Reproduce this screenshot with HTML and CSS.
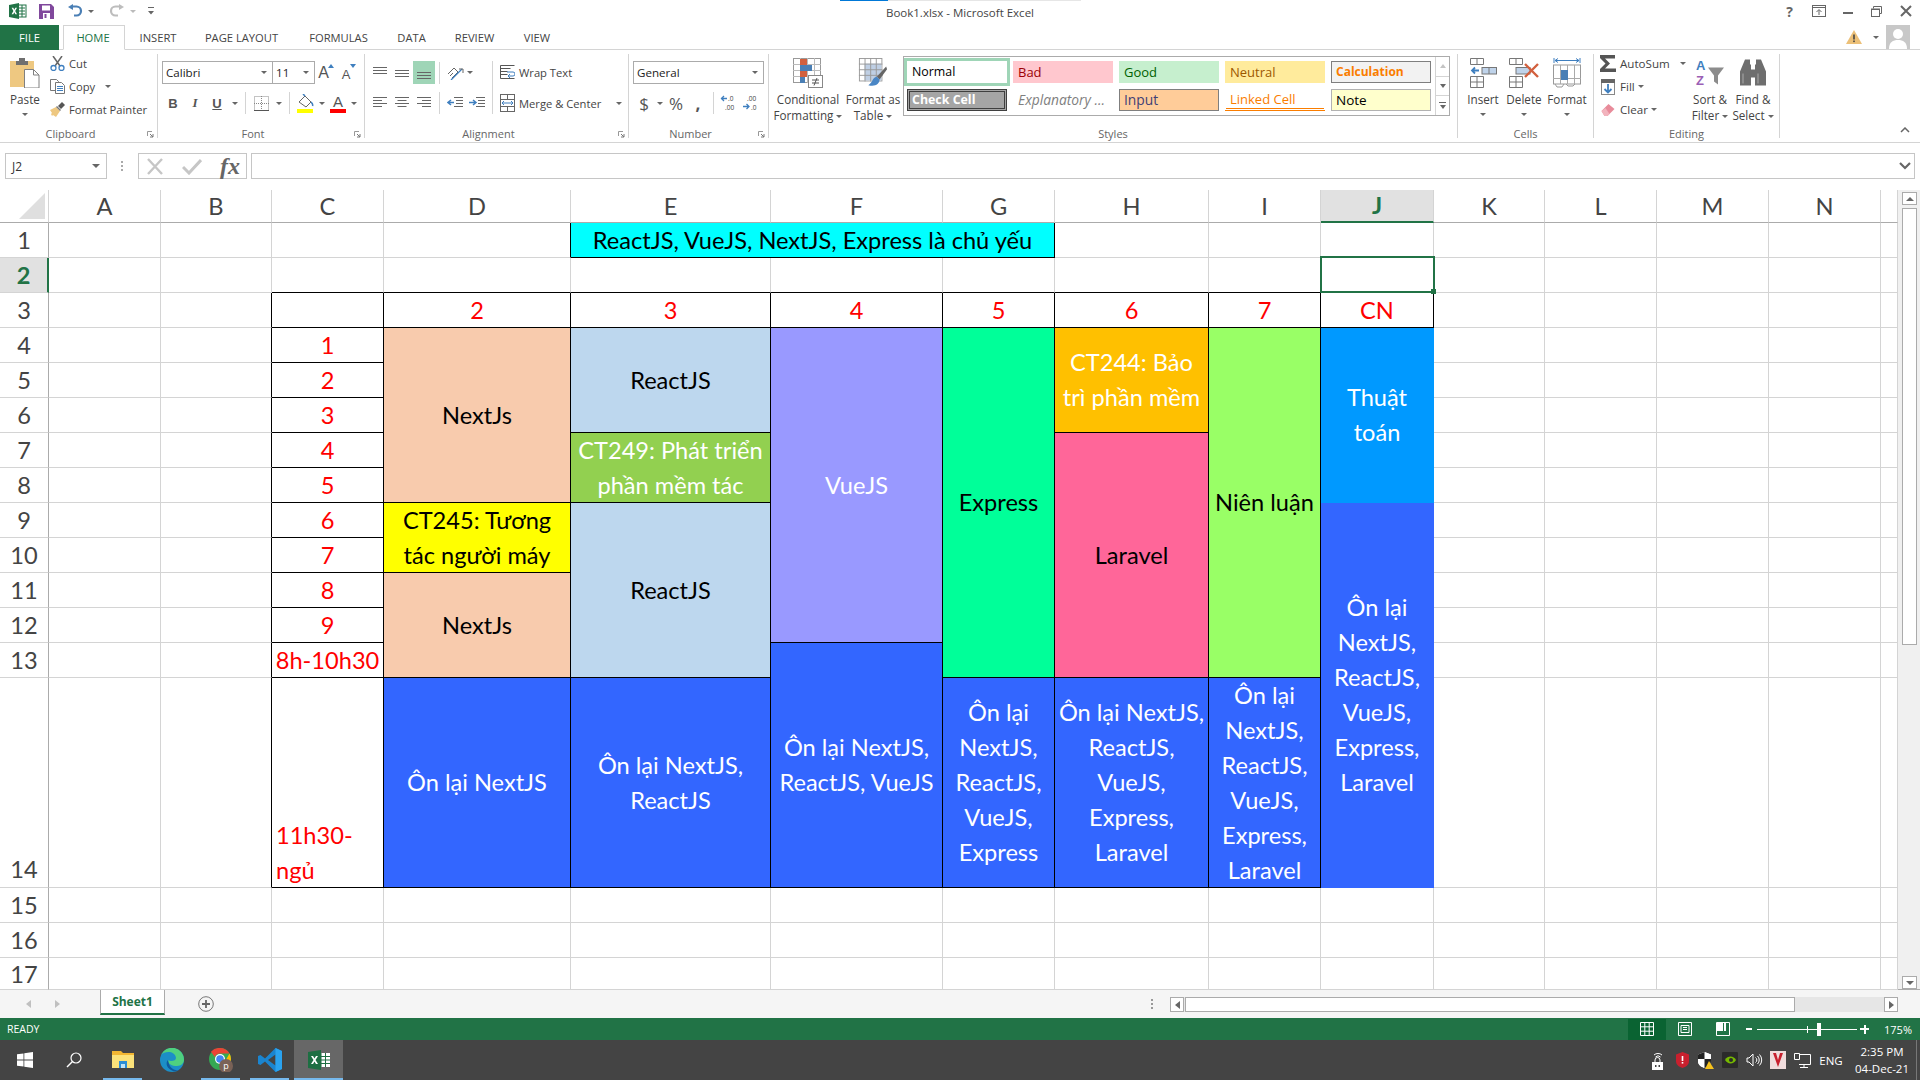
FILE: index.html
```html
<!DOCTYPE html>
<html lang="vi">
<head>
<meta charset="utf-8">
<title>Book1.xlsx - Microsoft Excel</title>
<link rel="stylesheet" href="styles.css">
</head>
<body>
<div class="app">

<header class="titlebar">
  <div class="progress"><span></span></div>
  <div class="qat">
    <svg class="q-logo" width="18" height="16" viewBox="0 0 18 16"><rect x="8" y="2" width="9" height="12" fill="#fff" stroke="#217346"/><path d="M10 5h6M10 8h6M10 11h6M13 2v12" stroke="#217346"/><path d="M0 2l10-2v16L0 14z" fill="#217346"/><path d="M2.6 4.8h1.7l1 2 1-2H8L6.2 8 8 11.2H6.3L5.3 9.2l-1 2H2.6L4.4 8z" fill="#fff"/></svg>
    <svg class="q-save" width="15" height="15" viewBox="0 0 15 15"><path d="M0 0h12l3 3v12H0z" fill="#80489c"/><rect x="3" y="1.5" width="8" height="5" fill="#fff"/><rect x="4" y="9" width="7" height="6" fill="#fff"/><rect x="5.5" y="10" width="2" height="4" fill="#80489c"/></svg>
    <svg class="q-undo" width="15" height="14" viewBox="0 0 15 14"><path d="M4 2.5h4.5a4.5 4.5 0 0 1 0 9H6" fill="none" stroke="#4a7fb5" stroke-width="2.2"/><path d="M5 0v6L0 3z" fill="#4a7fb5"/></svg>
    <i class="caret q-c1"></i>
    <svg class="q-redo" width="15" height="14" viewBox="0 0 15 14"><path d="M11 2.5H6.500a4.500 4.500 0 0 0 0 9H9" fill="none" stroke="#bdbdbd" stroke-width="2.200"/><path d="M10 0v6l5-3z" fill="#bdbdbd"/></svg>
    <i class="caret q-c2 pale"></i>
    <svg class="q-more" width="6" height="8" viewBox="0 0 6 8"><path d="M0 0h6v1H0zM0 4h6L3 7.500z" fill="#666"/></svg>
  </div>
  <div class="doc-title">Book1.xlsx - Microsoft Excel</div>
  <div class="win">
    <span class="w-help">?</span>
    <span class="w-b"><svg width="14" height="12" viewBox="0 0 14 12"><rect x=".5" y=".5" width="13" height="11" fill="none" stroke="#666"/><path d="M.5 2.500h13" stroke="#666"/><path d="M7 10V5M4.500 7L7 4.500 9.500 7" fill="none" stroke="#666"/></svg></span>
    <span class="w-b"><svg width="10" height="10" viewBox="0 0 10 10"><rect y="6" width="10" height="2" fill="#666"/></svg></span>
    <span class="w-b"><svg width="11" height="11" viewBox="0 0 11 11"><path d="M2.500 2.500V.5h8v7H8.500" fill="none" stroke="#666"/><rect x=".5" y="3" width="8" height="7.500" fill="none" stroke="#666"/><path d="M.5 3.500h8" stroke="#666"/></svg></span>
    <span class="w-b"><svg width="12" height="12" viewBox="0 0 12 12"><path d="M1 1l10 10M11 1L1 11" stroke="#666" stroke-width="2"/></svg></span>
  </div>
</header>

<nav class="tabs">
  <span class="tab file">FILE</span>
  <span class="tab home">HOME</span>
  <span class="tab t-insert">INSERT</span>
  <span class="tab t-page">PAGE LAYOUT</span>
  <span class="tab t-form">FORMULAS</span>
  <span class="tab t-data">DATA</span>
  <span class="tab t-rev">REVIEW</span>
  <span class="tab t-view">VIEW</span>
  <div class="account">
    <svg width="16" height="14" viewBox="0 0 16 14"><path d="M8 0l8 14H0z" fill="#ecc078"/><rect x="7.200" y="4.500" width="1.600" height="5" fill="#444"/><rect x="7.200" y="10.500" width="1.600" height="1.600" fill="#444"/></svg>
    <i class="caret acc-c"></i>
    <svg class="avatar" width="24" height="24" viewBox="0 0 24 24"><rect width="24" height="24" fill="#c8c8c8"/><circle cx="12" cy="9" r="5" fill="#fff"/><path d="M3 24c0-7 4-9 9-9s9 2 9 9z" fill="#fff"/></svg>
  </div>
</nav>

<section class="ribbon">

  <div class="group g-clip">
    <div class="body clip-body">
      <div class="big paste">
        <svg width="30" height="30" viewBox="0 0 30 30"><rect y="3" width="24" height="26" fill="#eec881"/><path d="M6 3h12v4H6z" fill="#6f6f6f"/><path d="M9 3V0h6v3" fill="#6f6f6f"/><path d="M14.500 11.500h9l5.500 5.500v13h-14.500z" fill="#fff" stroke="#808080"/><path d="M23.500 11.500v5.500H29" fill="none" stroke="#808080"/></svg>
        <span class="lbl">Paste</span>
        <i class="caret"></i>
      </div>
      <div class="smalls">
        <div class="si"><svg width="15" height="15" viewBox="0 0 15 15"><path d="M3 0l7 10M12 0L5 10" stroke="#666" stroke-width="1.500"/><circle cx="3.500" cy="12" r="2.500" fill="none" stroke="#3f7fbf" stroke-width="1.300"/><circle cx="11.500" cy="12" r="2.500" fill="none" stroke="#3f7fbf" stroke-width="1.300"/></svg><span>Cut</span></div>
        <div class="si"><svg width="15" height="15" viewBox="0 0 15 15"><path d="M.5 .5h6l2 2v9h-8z" fill="#fff" stroke="#777"/><path d="M5.500 3.500h6l3 3v8h-9z" fill="#fff" stroke="#777"/><path d="M7 7.500h6M7 9.500h6M7 11.500h6" stroke="#3f7fbf"/></svg><span>Copy</span><i class="caret copy-c"></i></div>
        <div class="si"><svg width="15" height="15" viewBox="0 0 15 15"><path d="M0 8l6-3 4 4-4 6-3-2-1 1-1-2 1-1z" fill="#eec881"/><path d="M6 5l4 4 1-1-4-4z" fill="#777"/><path d="M8 4l4-4 3 3-4 4z" fill="#555"/></svg><span>Format Painter</span></div>
      </div>
    </div>
    <div class="glabel wl">Clipboard<svg class="launch" width="7" height="7" viewBox="0 0 7 7"><path d="M.5 5V.5H5" fill="none" stroke="#999"/><path d="M3 3l3 3M6 3v3H3" fill="none" stroke="#777"/></svg></div>
  </div>

  <div class="group g-font">
    <div class="body stack">
      <div class="row1">
        <div class="combo c-font"><span>Calibri</span><i class="caret"></i></div>
        <div class="combo c-size"><span>11</span><i class="caret"></i></div>
        <div class="tool w22 grow"><span class="fa big-a">A</span><i class="tri-up"></i></div>
        <div class="tool w22 grow"><span class="fa small-a">A</span><i class="tri-down"></i></div>
      </div>
      <div class="row2">
        <div class="tool w22 fb">B</div>
        <div class="tool w22 fi">I</div>
        <div class="tool w22 fu">U</div>
        <div class="tool w13"><i class="caret"></i></div>
        <i class="sep s-a"></i>
        <div class="tool w22"><svg width="15" height="15" viewBox="0 0 15 15"><path d="M.5 .5h14v14H.5z" fill="none" stroke="#888" stroke-dasharray="1 1"/><path d="M7.500 0v15M0 7.500h15" stroke="#888" stroke-dasharray="1 1"/><path d="M0 14.500h15" stroke="#555"/></svg></div>
        <div class="tool w13"><i class="caret"></i></div>
        <i class="sep s-a"></i>
        <div class="tool w22"><svg width="17" height="19" viewBox="0 0 17 19"><path d="M2 8l6-6 6 6-5 5z" fill="#fff" stroke="#666"/><path d="M6 0l2 2M14 8c2 2 2 3 1.500 4" stroke="#3f7fbf" fill="none" stroke-width="1.500"/><rect y="15" width="16" height="4" fill="#ff0"/></svg></div>
        <div class="tool w11"><i class="caret"></i></div>
        <div class="tool w22 fontcolor"><span class="fa fc">A</span><i class="bar"></i></div>
        <div class="tool w10"><i class="caret"></i></div>
      </div>
    </div>
    <div class="glabel wl">Font<svg class="launch" width="7" height="7" viewBox="0 0 7 7"><path d="M.5 5V.5H5" fill="none" stroke="#999"/><path d="M3 3l3 3M6 3v3H3" fill="none" stroke="#777"/></svg></div>
  </div>

  <div class="group g-align">
    <div class="body align-body">
      <div class="stack">
        <div class="row1">
          <div class="tool w22"><svg width="14" height="12" viewBox="0 0 14 12"><path d="M0 .5h14M0 3.500h14M0 6.500h14" stroke="#666"/></svg></div>
          <div class="tool w22"><svg width="14" height="12" viewBox="0 0 14 12"><path d="M0 3.500h14M0 6.500h14M0 9.500h14" stroke="#666"/></svg></div>
          <div class="tool w22 on"><svg width="14" height="12" viewBox="0 0 14 12"><path d="M0 5.500h14M0 8.500h14M0 11.500h14" stroke="#666"/></svg></div>
          <i class="sep"></i>
          <div class="tool w22"><svg width="17" height="15" viewBox="0 0 17 15"><path d="M1 9l6-6 4 4-6 6M3 11l3-3" fill="none" stroke="#666"/><path d="M4 15L15 4" stroke="#3f7fbf" stroke-width="1.200"/><path d="M12 4h4v4" fill="none" stroke="#666"/></svg></div>
          <div class="tool w22 left"><i class="caret"></i></div>
        </div>
        <div class="row2">
          <div class="tool w22"><svg width="14" height="12" viewBox="0 0 14 12"><path d="M0 .5h14M0 3.500h9M0 6.500h14M0 9.500h9" stroke="#666"/></svg></div>
          <div class="tool w22"><svg width="14" height="12" viewBox="0 0 14 12"><path d="M0 .5h14M2.500 3.500h9M0 6.500h14M2.500 9.500h9" stroke="#666"/></svg></div>
          <div class="tool w22"><svg width="14" height="12" viewBox="0 0 14 12"><path d="M0 .5h14M5 3.500h9M0 6.500h14M5 9.500h9" stroke="#666"/></svg></div>
          <i class="sep"></i>
          <div class="tool w22"><svg width="16" height="12" viewBox="0 0 16 12"><path d="M7 .5h9M9 3.500h7M9 6.500h7M7 9.500h9" stroke="#666"/><path d="M7 5.500H2M4 3L1 5.500 4 8" fill="none" stroke="#3f7fbf" stroke-width="1.500"/></svg></div>
          <div class="tool w22"><svg width="16" height="12" viewBox="0 0 16 12"><path d="M7 .5h9M9 3.500h7M9 6.500h7M7 9.500h9" stroke="#666"/><path d="M0 5.500h6M4 3l3 2.500L4 8" fill="none" stroke="#3f7fbf" stroke-width="1.500"/></svg></div>
        </div>
      </div>
      <i class="sep tall"></i>
      <div class="stack">
        <div class="row1 lined">
          <svg width="15" height="15" viewBox="0 0 15 15"><path d="M.5 .5h14M.5 3.500h10M.5 6.500h7M.5 9.500h7M.5 13.500h14M.5 .5v13" fill="none" stroke="#555"/><path d="M7 7h6a1.500 1.500 0 0 1 0 4H9M10 9l-2 2 2 2" fill="none" stroke="#3f7fbf"/></svg>
          <span>Wrap Text</span>
        </div>
        <div class="row2 lined">
          <svg width="15" height="18" viewBox="0 0 15 18"><rect x=".5" y=".5" width="14" height="17" fill="none" stroke="#666"/><path d="M.5 5.500h14M.5 12.500h14M7.500 .5v5M7.500 12.500v5" stroke="#666"/><path d="M2 9h11M4 7L2 9l2 2M11 7l2 2-2 2" fill="none" stroke="#3f7fbf"/></svg>
          <span>Merge &amp; Center</span><i class="caret merge-c"></i>
        </div>
      </div>
    </div>
    <div class="glabel wl">Alignment<svg class="launch" width="7" height="7" viewBox="0 0 7 7"><path d="M.5 5V.5H5" fill="none" stroke="#999"/><path d="M3 3l3 3M6 3v3H3" fill="none" stroke="#777"/></svg></div>
  </div>

  <div class="group g-num">
    <div class="body stack">
      <div class="row1"><div class="combo c-num"><span>General</span><i class="caret"></i></div></div>
      <div class="row2">
        <div class="tool w22 sym">$</div>
        <div class="tool w10"><i class="caret"></i></div>
        <div class="tool w22 sym pct">%</div>
        <div class="tool w22 sym comma">,</div>
        <i class="sep"></i>
        <div class="tool w22"><svg class="ov" width="16" height="16" viewBox="0 0 16 16"><path d="M0 3.500h6M3 1L.5 3.500 3 6" fill="none" stroke="#3f7fbf" stroke-width="1.300"/><text x="7" y="6" class="nt">.0</text><text x="4" y="15" class="nt">.00</text></svg></div>
        <div class="tool w22"><svg class="ov" width="16" height="16" viewBox="0 0 16 16"><text x="4" y="6" class="nt">.00</text><path d="M0 11.500h6M3.500 9L6 11.500 3.500 14" fill="none" stroke="#3f7fbf" stroke-width="1.300"/><text x="8" y="15" class="nt">.0</text></svg></div>
      </div>
    </div>
    <div class="glabel wl">Number<svg class="launch" width="7" height="7" viewBox="0 0 7 7"><path d="M.5 5V.5H5" fill="none" stroke="#999"/><path d="M3 3l3 3M6 3v3H3" fill="none" stroke="#777"/></svg></div>
  </div>

  <div class="group g-styles">
    <div class="body styles-body">
      <div class="big cf">
        <svg width="30" height="30" viewBox="0 0 30 30"><rect x=".5" y=".5" width="27" height="24" fill="#fff" stroke="#999"/><path d="M7.500 0v25M14.500 0v25M21.500 0v25M0 6.500h28M0 12.500h28M0 18.500h28" stroke="#bbb"/><rect x="7" y="1" width="7" height="6" fill="#d2603e"/><rect x="7" y="7" width="12" height="6" fill="#4a7fb5"/><rect x="7" y="13" width="7" height="6" fill="#d2603e"/><rect x="7" y="19" width="5" height="6" fill="#4a7fb5"/><rect x="15.500" y="17.500" width="14" height="12" fill="#fff" stroke="#888"/><path d="M19 22h7M19 25h7M24 20l-3 7.500" stroke="#555"/></svg>
        <span class="lbl">Conditional</span>
        <span class="lbl">Formatting<i class="caret in"></i></span>
      </div>
      <div class="big fat">
        <svg width="30" height="32" viewBox="0 0 30 32"><rect x=".5" y=".5" width="24" height="24" fill="#fff" stroke="#999"/><rect x="6" y="6" width="18" height="18" fill="#bfcfe4"/><path d="M6.500 0v25M12.500 0v25M18.500 0v25M0 6.500h25M0 12.500h25M0 18.500h25" stroke="#999"/><path d="M29 9L19 20l3 3 8-11z" fill="#666"/><path d="M19 20c-5 1-4 6-9 9 7 2 12-1 12-6z" fill="#4a86c5"/></svg>
        <span class="lbl">Format as</span>
        <span class="lbl">Table<i class="caret in"></i></span>
      </div>
      <div class="gallery">
        <div class="cells-grid">
          <div class="st st-normal">Normal</div>
          <div class="st st-bad">Bad</div>
          <div class="st st-good">Good</div>
          <div class="st st-neutral">Neutral</div>
          <div class="st st-calc">Calculation</div>
          <div class="st st-check">Check Cell</div>
          <div class="st st-expl">Explanatory ...</div>
          <div class="st st-input">Input</div>
          <div class="st st-linked">Linked Cell</div>
          <div class="st st-note">Note</div>
        </div>
        <div class="g-scroll">
          <div class="gs"><i class="tri-up pale"></i></div>
          <div class="gs"><i class="tri-dn"></i></div>
          <div class="gs"><i class="dash"></i><i class="tri-dn"></i></div>
        </div>
      </div>
    </div>
    <div class="glabel">Styles</div>
  </div>

  <div class="group g-cells">
    <div class="body cells-body">
      <div class="big b-ins">
        <svg width="27" height="30" viewBox="0 0 27 30"><path d="M.5 .5h13v6H.5zM7 .5v6M.5 18.500h13v11H.5zM.5 24h13M7 18.500v11" fill="none" stroke="#777"/><rect x="12" y="9.500" width="14.500" height="6.500" fill="#bfd3ea" stroke="#777"/><path d="M19 9.500v6.500" stroke="#777"/><path d="M9 12.500H2M5 9.500l-3 3 3 3" fill="none" stroke="#3f7fbf" stroke-width="1.800"/></svg>
        <span class="lbl">Insert</span><i class="caret"></i>
      </div>
      <div class="big b-del">
        <svg width="30" height="30" viewBox="0 0 30 30"><path d="M.5 .5h13v6H.5zM7 .5v6M.5 18.500h13v11H.5zM.5 24h13M7 18.500v11" fill="none" stroke="#777"/><rect x="7" y="9.500" width="14" height="6.500" fill="#bfd3ea" stroke="#777"/><path d="M16 6l13 13M29 6L16 19" stroke="#d2603e" stroke-width="2.400"/></svg>
        <span class="lbl">Delete</span><i class="caret"></i>
      </div>
      <div class="big b-fmt">
        <svg width="28" height="30" viewBox="0 0 28 30"><path d="M1 0v5M27 0v5M2 2.500h24M5 .5L2 2.500l3 2M23 .5l3 2-3 2" fill="none" stroke="#3f7fbf"/><rect x=".5" y="7" width="27" height="19" fill="#fff" stroke="#999"/><path d="M7.500 7v19M14.500 7v19M21.500 7v19M0 20.500h28" stroke="#aaa"/><rect x="8" y="12" width="7" height="10" fill="#4a7fb5"/><path d="M2 26l2 3h5l2-3M13 26l2 2h5l2-2" fill="none" stroke="#999"/></svg>
        <span class="lbl">Format</span><i class="caret"></i>
      </div>
    </div>
    <div class="glabel">Cells</div>
  </div>

  <div class="group g-edit">
    <div class="body edit-body">
      <div class="smalls edit-smalls">
        <div class="si"><svg width="16" height="17" viewBox="0 0 16 17"><path d="M0 0h15v3.500H5l5 5-5 5h11V17H0v-3l5.500-5.500L0 3z" fill="#555"/></svg><span>AutoSum</span><i class="caret sum-c"></i></div>
        <div class="si"><svg width="14" height="16" viewBox="0 0 14 16"><rect x=".5" y=".5" width="13" height="15" fill="#fff" stroke="#888"/><rect width="14" height="4" fill="#666"/><path d="M7 5v8M3.500 10L7 13.500 10.500 10" fill="none" stroke="#3f7fbf" stroke-width="1.800"/></svg><span>Fill</span><i class="caret in"></i></div>
        <div class="si"><svg width="15" height="14" viewBox="0 0 15 14"><path d="M1 8l7-7 6 5-7 7H4z" fill="#e88b9a"/><path d="M1 8l3 5h3l2-2-4-6z" fill="#f2b3bd"/></svg><span>Clear</span><i class="caret in"></i></div>
      </div>
      <div class="big b-sort">
        <svg class="ov" width="29" height="27" viewBox="0 0 29 27"><text x="0" y="10" class="az a">A</text><text x="0" y="25" class="az z">Z</text><path d="M12 8h16l-6 8v9l-4-3v-6z" fill="#8c8c8c"/></svg>
        <span class="lbl">Sort &amp;</span>
        <span class="lbl">Filter<i class="caret in"></i></span>
      </div>
      <div class="big b-find">
        <svg width="26" height="27" viewBox="0 0 26 27"><path d="M5 0h5v5h1v21H0V12zM21 0h-5v5h-1v21h11V12z" fill="#6e6e6e"/><path d="M11 10h4v8h-4z" fill="#6e6e6e"/><path d="M3 14v10M18 14v10" stroke="#aaa"/></svg>
        <span class="lbl">Find &amp;</span>
        <span class="lbl">Select<i class="caret in"></i></span>
      </div>
    </div>
    <div class="glabel">Editing</div>
  </div>

  <div class="collapse"><svg width="10" height="6" viewBox="0 0 10 6"><path d="M1 5l4-4 4 4" fill="none" stroke="#666" stroke-width="1.500"/></svg></div>
</section>

<section class="fbar">
  <div class="namebox"><span>J2</span><i class="caret dark"></i></div>
  <div class="grip"></div>
  <div class="fbtns">
    <svg width="18" height="17" viewBox="0 0 18 17"><path d="M2 1l14 15M16 1L2 16" stroke="#c6c6c6" stroke-width="2.400"/></svg>
    <svg width="20" height="17" viewBox="0 0 20 17"><path d="M1 9l6 6L19 2" fill="none" stroke="#c6c6c6" stroke-width="3"/></svg>
    <span class="fx">fx</span>
  </div>
  <div class="finput"><svg width="12" height="8" viewBox="0 0 12 8"><path d="M1 1l5 5 5-5" fill="none" stroke="#666" stroke-width="2.200"/></svg></div>
</section>

<section class="sheet">
  <div class="grid">
    <!-- header -->
    <div class="corner"><i></i></div><div class="ch">A</div><div class="ch">B</div><div class="ch">C</div><div class="ch">D</div><div class="ch">E</div><div class="ch">F</div><div class="ch">G</div><div class="ch">H</div><div class="ch">I</div><div class="ch act">J</div><div class="ch">K</div><div class="ch">L</div><div class="ch">M</div><div class="ch">N</div><div class="ch"></div>
    <!-- 1 -->
    <div class="rh">1</div><div class="c"></div><div class="c"></div><div class="c"></div><div class="c kr"></div><div class="c t x3 bg-cyan">ReactJS, VueJS, NextJS, Express là chủ yếu</div><div class="c"></div><div class="c"></div><div class="c"></div><div class="c"></div><div class="c"></div><div class="c"></div><div class="c"></div><div class="c"></div>
    <!-- 2 -->
    <div class="rh act">2</div><div class="c"></div><div class="c"></div><div class="c kb"></div><div class="c kb"></div><div class="c kb"></div><div class="c kb"></div><div class="c kb"></div><div class="c kb"></div><div class="c kb"></div><div class="c kb cur"><i class="sel"><b></b></i></div><div class="c"></div><div class="c"></div><div class="c"></div><div class="c"></div><div class="c"></div>
    <!-- 3 -->
    <div class="rh">3</div><div class="c"></div><div class="c kr"></div><div class="c t"></div><div class="c t red">2</div><div class="c t red">3</div><div class="c t red">4</div><div class="c t red">5</div><div class="c t red">6</div><div class="c t red">7</div><div class="c t red">CN</div><div class="c"></div><div class="c"></div><div class="c"></div><div class="c"></div><div class="c"></div>
    <!-- 4 -->
    <div class="rh">4</div><div class="c"></div><div class="c kr"></div><div class="c t red">1</div>
    <div class="c t y5 bg-peach">NextJs</div><div class="c t y3 bg-sky">ReactJS</div><div class="c t y9 bg-violet wh">VueJS</div><div class="c t y10 bg-mint">Express</div><div class="c t y3 bg-amber wh">CT244: Bảo<br>trì phần mềm</div><div class="c t y10 bg-lime">Niên luận</div><div class="c nb y5 bg-azure wh">Thuật<br>toán</div>
    <div class="c"></div><div class="c"></div><div class="c"></div><div class="c"></div><div class="c"></div>
    <!-- 5 -->
    <div class="rh">5</div><div class="c"></div><div class="c kr"></div><div class="c t red">2</div><div class="c"></div><div class="c"></div><div class="c"></div><div class="c"></div><div class="c"></div>
    <!-- 6 -->
    <div class="rh">6</div><div class="c"></div><div class="c kr"></div><div class="c t red">3</div><div class="c"></div><div class="c"></div><div class="c"></div><div class="c"></div><div class="c"></div>
    <!-- 7 -->
    <div class="rh">7</div><div class="c"></div><div class="c kr"></div><div class="c t red">4</div><div class="c t y2 bg-green wh">CT249: Phát triển<br>phần mềm tác</div><div class="c t y7 bg-pink">Laravel</div><div class="c"></div><div class="c"></div><div class="c"></div><div class="c"></div><div class="c"></div>
    <!-- 8 -->
    <div class="rh">8</div><div class="c"></div><div class="c kr"></div><div class="c t red">5</div><div class="c"></div><div class="c"></div><div class="c"></div><div class="c"></div><div class="c"></div>
    <!-- 9 -->
    <div class="rh">9</div><div class="c"></div><div class="c kr"></div><div class="c t red">6</div><div class="c t y2 bg-yellow">CT245: Tương<br>tác người máy</div><div class="c t y5 bg-sky">ReactJS</div><div class="c nb y6 bg-blue wh">Ôn lại<br>NextJS,<br>ReactJS,<br>VueJS,<br>Express,<br>Laravel</div><div class="c"></div><div class="c"></div><div class="c"></div><div class="c"></div><div class="c"></div>
    <!-- 10 -->
    <div class="rh">10</div><div class="c"></div><div class="c kr"></div><div class="c t red">7</div><div class="c"></div><div class="c"></div><div class="c"></div><div class="c"></div><div class="c"></div>
    <!-- 11 -->
    <div class="rh">11</div><div class="c"></div><div class="c kr"></div><div class="c t red">8</div><div class="c t y3 bg-peach">NextJs</div><div class="c"></div><div class="c"></div><div class="c"></div><div class="c"></div><div class="c"></div>
    <!-- 12 -->
    <div class="rh">12</div><div class="c"></div><div class="c kr"></div><div class="c t red">9</div><div class="c"></div><div class="c"></div><div class="c"></div><div class="c"></div><div class="c"></div>
    <!-- 13 -->
    <div class="rh">13</div><div class="c"></div><div class="c kr"></div><div class="c t red">8h-10h30</div><div class="c t y2 bg-blue wh">Ôn lại NextJS,<br>ReactJS, VueJS</div><div class="c"></div><div class="c"></div><div class="c"></div><div class="c"></div><div class="c"></div>
    <!-- 14 -->
    <div class="rh end">14</div><div class="c"></div><div class="c kr"></div><div class="c t red low">11h30-<br>ngủ</div><div class="c t bg-blue wh">Ôn lại NextJS</div><div class="c t bg-blue wh">Ôn lại NextJS,<br>ReactJS</div><div class="c t bg-blue wh">Ôn lại<br>NextJS,<br>ReactJS,<br>VueJS,<br>Express</div><div class="c t bg-blue wh">Ôn lại NextJS,<br>ReactJS,<br>VueJS,<br>Express,<br>Laravel</div><div class="c t bg-blue wh">Ôn lại<br>NextJS,<br>ReactJS,<br>VueJS,<br>Express,<br>Laravel</div><div class="c"></div><div class="c"></div><div class="c"></div><div class="c"></div><div class="c"></div>
    <!-- 15 -->
    <div class="rh">15</div><div class="c"></div><div class="c"></div><div class="c"></div><div class="c"></div><div class="c"></div><div class="c"></div><div class="c"></div><div class="c"></div><div class="c"></div><div class="c"></div><div class="c"></div><div class="c"></div><div class="c"></div><div class="c"></div><div class="c"></div>
    <!-- 16 -->
    <div class="rh">16</div><div class="c"></div><div class="c"></div><div class="c"></div><div class="c"></div><div class="c"></div><div class="c"></div><div class="c"></div><div class="c"></div><div class="c"></div><div class="c"></div><div class="c"></div><div class="c"></div><div class="c"></div><div class="c"></div><div class="c"></div>
    <!-- 17 -->
    <div class="rh">17</div><div class="c"></div><div class="c"></div><div class="c"></div><div class="c"></div><div class="c"></div><div class="c"></div><div class="c"></div><div class="c"></div><div class="c"></div><div class="c"></div><div class="c"></div><div class="c"></div><div class="c"></div><div class="c"></div><div class="c"></div>
  </div>
  <div class="vscroll">
    <div class="sbtn"><i class="tri-up dk"></i></div>
    <div class="vthumb"></div>
    <div class="vtrack"></div>
    <div class="sbtn"><i class="tri-dn dk"></i></div>
  </div>
</section>

<section class="sheetbar">
  <div class="nav"><i class="arr-l"></i><i class="arr-r"></i></div>
  <div class="sheet-tab">Sheet1</div>
  <svg class="add" width="16" height="16" viewBox="0 0 16 16"><circle cx="8" cy="8" r="7.300" fill="none" stroke="#777"/><path d="M8 4v8M4 8h8" stroke="#666" stroke-width="1.800"/></svg>
  <div class="dots"></div>
  <div class="hscroll">
    <div class="hbtn"><i class="arr-l dk"></i></div>
    <div class="hthumb"></div>
    <div class="htrack"></div>
    <div class="hbtn"><i class="arr-r dk"></i></div>
  </div>
</section>

<footer class="status">
  <span class="ready">READY</span>
  <div class="views">
    <div class="view on"><svg width="14" height="14" viewBox="0 0 14 14"><path d="M.5 .5h13v13H.5zM.5 4.800h13M.5 9.200h13M4.800 .5v13M9.200 .5v13" fill="none" stroke="#fff"/></svg></div>
    <div class="view"><svg width="14" height="14" viewBox="0 0 14 14"><path d="M.5 .5h13v13H.5z" fill="none" stroke="#fff"/><path d="M3 3.500h8v7H3zM5 5.500h4M5 7.500h4" fill="none" stroke="#fff"/></svg></div>
    <div class="view"><svg width="14" height="14" viewBox="0 0 14 14"><path d="M.5 .5h13v13H.5z" fill="none" stroke="#fff"/><rect x="1" y="1" width="6" height="8" fill="#fff"/><rect x="8" y="1" width="2" height="8" fill="#fff"/></svg></div>
  </div>
  <div class="zoom">
    <span class="z-minus"></span>
    <div class="slider"><i class="tick"></i><i class="knob"></i></div>
    <span class="z-plus"></span>
  </div>
  <span class="pct-z">175%</span>
</footer>

<footer class="taskbar">
  <div class="tile"><svg width="16" height="16" viewBox="0 0 16 16"><path d="M0 2.300L6.500 1.400v6.200H0zM7.300 1.300L16 0v7.600H7.300zM0 8.400h6.500v6.200L0 13.700zM7.300 8.400H16V16l-8.700-1.300z" fill="#fff"/></svg></div>
  <div class="tile"><svg width="16" height="16" viewBox="0 0 16 16"><circle cx="10" cy="6" r="5" fill="none" stroke="#fff" stroke-width="1.200"/><path d="M6.500 9.500L1 15" stroke="#fff" stroke-width="1.500"/></svg></div>
  <div class="tile run"><svg width="22" height="20" viewBox="0 0 22 20"><path d="M0 1h9l2 2h11v15H0z" fill="#f2b632"/><path d="M0 5h22v13H0z" fill="#fbe27a"/><path d="M7 11h8v7H7z" fill="#2b8ed6"/><path d="M9 14h4v4H9z" fill="#bfe3f7"/></svg></div>
  <div class="tile"><svg width="24" height="24" viewBox="0 0 24 24"><circle cx="12" cy="12" r="12" fill="#1c8ec7"/><path d="M24 12A12 12 0 0 0 1 7c3-4 14-5 15 3 0 2-2 3-5 3-2 0-3-1-3-1 0 4 4 6 9 6 4 0 7-3 7-6z" fill="#4fd07f"/><path d="M8 12c-3 3-1 9 5 11 2 .5 4 0 6-1-6 1-10-3-11-10z" fill="#0f5a9e"/></svg></div>
  <div class="tile run chrome"><svg width="24" height="24" viewBox="0 0 24 24"><circle cx="11" cy="11" r="11" fill="#34a853"/><path d="M11 0a11 11 0 0 1 9.500 5.500H11A5.500 5.500 0 0 0 5.800 9L2 3.700A11 11 0 0 1 11 0z" fill="#ea4335"/><path d="M20.500 5.500A11 11 0 0 1 11 22l4.700-8z" fill="#fbbc05"/><circle cx="11" cy="11" r="5" fill="#fff"/><circle cx="11" cy="11" r="3.800" fill="#4285f4"/><circle cx="17" cy="18" r="7" fill="#7a6257"/><text x="17" y="21" class="ppl">p</text></svg></div>
  <div class="tile run"><svg width="24" height="24" viewBox="0 0 24 24"><path d="M17.500 0L24 3v18l-6.500 3L7 13.500 2.500 17 0 16V8l2.500-1L7 10.500z" fill="#1a85d0"/><path d="M17.500 6.500L10 12l7.500 5.500z" fill="#444"/><path d="M17.500 0L24 3v18l-6.500 3z" fill="#2aa3ef"/></svg></div>
  <div class="tile run act"><svg width="22" height="20" viewBox="0 0 22 20"><rect x="9" y="3" width="13" height="14" fill="#fff"/><path d="M13 3v14M17.500 3v14M9 6.500h13M9 10h13M9 13.500h13" stroke="#1d6f42"/><path d="M0 2l13-2v20L0 18z" fill="#1d6f42"/><path d="M3 6h2l1.500 2.600L8 6h2l-2.500 4L10 14H8l-1.500-2.600L5 14H3l2.500-4z" fill="#fff"/></svg></div>
  <div class="tray">
    <div class="ti"><svg width="12" height="19" viewBox="0 0 12 19"><path d="M2 4a6 6 0 0 1 8 0M3.500 6a3.500 3.500 0 0 1 5 0" fill="none" stroke="#fff"/><rect y="11" width="11" height="8" fill="#fff"/><path d="M3 11V9a2.500 2.500 0 0 1 5 0v2" fill="none" stroke="#fff"/><rect x="3" y="14" width="1.500" height="2" fill="#444"/><rect x="6.500" y="14" width="1.500" height="2" fill="#444"/></svg></div>
    <div class="ti"><svg width="13" height="16" viewBox="0 0 13 16"><path d="M6.500 0L13 2.500V9c0 4-3.500 6-6.500 7C3.500 15 0 13 0 9V2.500z" fill="#c8202e"/><rect x="5.700" y="4" width="1.600" height="5" fill="#fff"/><rect x="5.700" y="10" width="1.600" height="1.600" fill="#fff"/></svg></div>
    <div class="ti"><svg width="16" height="17" viewBox="0 0 16 17"><path d="M6.500 0L13 2.500V9c0 4-3.500 6-6.500 7C3.500 15 0 13 0 9V2.500z" fill="#fff"/><path d="M6.500 0L13 2.500V7H6.500zM6.500 7H0v2c0 4 3.500 6 6.500 7z" fill="#fff"/><path d="M6.500 0v7H0V2.500zM6.500 7H13v2c0 4-3.500 6-6.500 7z" fill="#222"/><path d="M11 9l5 8H7z" fill="#f6c21c"/></svg></div>
    <div class="ti"><svg width="16" height="16" viewBox="0 0 16 16"><rect width="16" height="16" rx="1" fill="#2b2b2b"/><path d="M3 8c3-5 9-4 11 0-2 4-8 5-11 0z" fill="#76b900"/><circle cx="9" cy="8" r="2" fill="#2b2b2b"/></svg></div>
    <div class="ti"><svg width="17" height="14" viewBox="0 0 17 14"><path d="M1 5h2l4-4v12L3 9H1z" fill="none" stroke="#fff"/><path d="M9.500 4.500a3 3 0 0 1 0 5M11.500 3a5.500 5.500 0 0 1 0 8M13.500 1.500a8 8 0 0 1 0 11" fill="none" stroke="#fff"/></svg></div>
    <div class="ti"><svg width="16" height="18" viewBox="0 0 16 18"><rect width="16" height="18" fill="#f0dcdc"/><path d="M3 2l5 14 5-14h-3L8 9 6 2z" fill="#c8202e"/></svg></div>
    <div class="ti"><svg width="17" height="15" viewBox="0 0 17 15"><path d="M5 1.500h11.500v10H5M.5 .5h5v6h-5zM10 11.500v3M6 14.500h8" fill="none" stroke="#fff"/></svg></div>
    <span class="eng">ENG</span>
    <div class="clock"><span>2:35 PM</span><span>04-Dec-21</span></div>
    <i class="desk"></i>
  </div>
</footer>

</div>
</body>
</html>
```
FILE: styles.css
```css
* { box-sizing: border-box; }
html, body { margin: 0; padding: 0; background: #fff; }
body { font-family: "Open Sans", "Noto Sans", sans-serif; font-size: 11.2px; color: #444; }
i { display: inline-block; font-style: normal; }
.app { width: 1920px; height: 1080px; overflow: hidden; display: flex; flex-direction: column; }
.ov { overflow: visible; }

/* shared little shapes */
.caret { width: 0; height: 0; border-left: 3px solid transparent; border-right: 3px solid transparent; border-top: 3px solid #666; }
.caret.pale { border-top-color: #bbb; }
.caret.dark { border-left-width: 4px; border-right-width: 4px; border-top: 4px solid #666; }
.caret.in { margin-left: 3px; vertical-align: 2px; }
.tri-up { width: 0; height: 0; border-left: 3px solid transparent; border-right: 3px solid transparent; border-bottom: 4px solid #3f7fbf; }
.tri-down { width: 0; height: 0; border-left: 3px solid transparent; border-right: 3px solid transparent; border-top: 4px solid #3f7fbf; }
.tri-dn { width: 0; height: 0; border-left: 3.5px solid transparent; border-right: 3.5px solid transparent; border-top: 4px solid #666; }
.tri-up.pale { border-bottom-color: #c4c4c4; }
.tri-up.dk { border-bottom-color: #666; border-left-width: 4px; border-right-width: 4px; }
.tri-dn.dk { border-left-width: 4px; border-right-width: 4px; }

/* title bar */
.titlebar { position: relative; height: 25px; flex: none; display: grid; grid-template-columns: 1fr auto 1fr; align-items: center; }
.progress { position: absolute; left: 840px; top: 0; width: 241px; height: 1px; background: #e6e6e6; }
.progress span { display: block; width: 48px; height: 1px; background: #0078d7; }
.qat { display: flex; align-items: center; padding-left: 9px; height: 22px; margin-bottom: 3px; }
.q-save { margin-left: 12px; }
.q-undo { margin-left: 14px; }
.q-c1 { margin-left: 5px; }
.q-redo { margin-left: 15px; }
.q-c2 { margin-left: 6px; }
.q-more { margin-left: 12px; }
.doc-title { font-size: 11.5px; color: #444; margin-bottom: 1px; }
.win { display: flex; align-items: center; justify-content: flex-end; height: 22px; margin-bottom: 3px; }
.win > span { width: 29px; display: flex; align-items: center; justify-content: center; }
.w-help { font-weight: 700; font-size: 14px; color: #666; }

/* tabs */
.tabs { height: 25px; flex: none; display: flex; border-bottom: 1px solid #d4d4d4; font-size: 11.2px; color: #444; position: relative; }
.tab { display: flex; align-items: center; justify-content: center; height: 25px; }
.tab.file { width: 59px; background: #217346; color: #fff; margin-right: 4px; }
.tab.home { width: 62px; color: #217346; background: #fff; border: 1px solid #d4d4d4; border-bottom-color: #fff; padding-right: 2px; }
.t-insert { width: 66px; }
.t-page { width: 101px; }
.t-form { width: 93px; }
.t-data { width: 53px; }
.t-rev { width: 73px; }
.t-view { width: 52px; }
.account { margin-left: auto; display: flex; align-items: center; height: 24px; padding-right: 10px; }
.acc-c { margin-left: 11px; margin-right: 7px; }
.avatar { display: block; }

/* ribbon */
.ribbon { height: 93px; flex: none; display: flex; border-bottom: 1px solid #d4d4d4; padding-top: 4px; position: relative; }
.group { height: 84px; border-right: 1px solid #d4d4d4; position: relative; display: flex; flex-direction: column; flex: none; }
.g-clip { width: 158px; }
.g-font { width: 207px; }
.g-align { width: 264px; }
.g-num { width: 140px; }
.g-styles { width: 689px; }
.g-cells { width: 136px; }
.g-edit { width: 186px; }
.body { flex: 1; min-height: 0; }
.glabel { height: 14px; line-height: 14px; margin-bottom: -3px; text-align: center; color: #666; font-size: 11px; position: relative; }
.glabel.wl { padding-right: 16px; }
.launch { position: absolute; right: 3px; top: 4px; }

.big { display: flex; flex-direction: column; align-items: center; flex: none; }
.big > svg { display: block; height: 30px; margin-bottom: 3px; }
.big .lbl { display: block; height: 16px; line-height: 16px; white-space: nowrap; font-size: 11.7px; }
.big > .caret { margin-top: 6px; }

.clip-body { display: flex; padding: 4px 0 0 0; }
.paste { width: 50px; }
.smalls { display: flex; flex-direction: column; }
.si { display: flex; align-items: center; height: 23px; white-space: nowrap; }
.si > svg { flex: none; width: 15px; margin-right: 4px; }
.clip-body .smalls { margin-top: -6px; }
.copy-c { margin-left: 10px; }

.stack { display: flex; flex-direction: column; }
.body.stack { padding-left: 4px; }
.row1 { display: flex; align-items: center; height: 23px; margin-top: 7px; }
.row2 { display: flex; align-items: center; height: 22px; margin-top: 8px; }
.tool { display: flex; align-items: center; justify-content: center; height: 23px; flex: none; position: relative; }
.w22 { width: 22px; } .w13 { width: 13px; } .w11 { width: 11px; } .w10 { width: 10px; }
.tool.on { background: #9fd5b7; }
.tool.left { justify-content: flex-start; padding-left: 1px; }
.sep { width: 1px; height: 22px; background: #d4d4d4; margin: 0 4px; flex: none; }
.s-a { margin: 0 4px 0 4px; }
.combo { display: flex; align-items: center; justify-content: space-between; height: 23px; border: 1px solid #ababab; padding: 0 5px 0 3px; color: #222; flex: none; font-size: 11.6px; }
.c-font { width: 111px; }
.c-size { width: 43px; margin-left: -1px; }
.c-num { width: 131px; }
.fa { font-family: "Liberation Sans", sans-serif; color: #555; }
.big-a { font-size: 16px; margin-left: -5px; }
.small-a { font-size: 13px; margin-left: -4px; margin-top: 3px; }
.grow i { position: absolute; right: 3px; top: 3px; }
.fb, .fi, .fu { font-family: "Liberation Sans", sans-serif; font-size: 13px; color: #555; }
.fb { font-weight: 700; }
.fi { font-style: italic; font-family: "Liberation Serif", serif; font-weight: 700; }
.fu { font-weight: 700; text-decoration: underline; }
.fontcolor { flex-direction: column; }
.fc { font-size: 15px; line-height: 15px; }
.bar { width: 16px; height: 4px; background: #f00; }

.align-body { display: flex; padding-left: 4px; }
.tall { margin-top: 7px; height: 53px; }
.lined { gap: 4px; white-space: nowrap; }
.lined > svg { margin-left: 3px; flex: none; }
.merge-c { margin-left: 11px; }

.sym { font-size: 17px; color: #555; }
.pct { font-size: 17px; }
.comma { font-weight: 700; }
.nt { font-size: 6.5px; fill: #444; font-family: "Open Sans", sans-serif; }

.styles-body { display: flex; padding-top: 4px; }
.cf { width: 78px; }
.fat { width: 52px; }
.gallery { margin: -2px 0 0 4px; width: 547px; height: 60px; border: 1px solid #ababab; display: flex; }
.cells-grid { display: grid; grid-template-columns: repeat(5, 100px); grid-template-rows: 22px 22px; gap: 6px; padding: 4px 0 0 3px; width: 532px; }
.g-scroll { width: 14px; border-left: 1px solid #d4d4d4; display: flex; flex-direction: column; }
.gs { flex: 1; display: flex; flex-direction: column; gap: 2px; align-items: center; justify-content: center; border-bottom: 1px solid #d4d4d4; }
.gs:last-child { border-bottom: 0; }
.dash { width: 7px; height: 1px; background: #666; }
.st { font-size: 13px; line-height: 20px; padding-left: 4px; white-space: nowrap; border: 1px solid transparent; }
.st-normal { color: #000; background: #fff; outline: 3px solid #9fd5b7; font-size: 12.4px; }
.st-bad { background: #ffc7ce; color: #9c0006; }
.st-good { background: #c6efce; color: #006100; }
.st-neutral { background: #ffeb9c; color: #9c5700; }
.st-calc { background: #f2f2f2; color: #fa7d00; font-weight: 700; border-color: #7f7f7f; font-size: 12px; }
.st-check { background: #a5a5a5; color: #fff; font-weight: 700; border: 3px double #3f3f3f; line-height: 16px; padding-left: 2px; font-size: 12.4px; }
.st-expl { color: #7f7f7f; font-style: italic; font-size: 13.8px; }
.st-input { background: #fc9; color: #3f3f76; border-color: #7f7f7f; font-size: 13.8px; }
.st-linked { color: #fa7d00; border-bottom: 3px double #fa7d00; line-height: 19px; }
.st-note { background: #ffc; color: #000; border-color: #b2b2b2; font-size: 13.5px; }

.cells-body { display: flex; padding: 4px 0 0 4px; }
.b-ins { width: 42px; }
.b-del { width: 40px; }
.b-fmt { width: 46px; }

.edit-body { display: flex; padding-top: 3px; }
.edit-smalls { width: 94px; padding-left: 6px; margin-top: -5px; font-size: 11.6px; }
.edit-smalls .si > svg { width: 16px; margin-right: 4px; }
.sum-c { margin-left: 10px; }
.b-sort { width: 44px; margin-top: 1px; }
.b-find { width: 42px; margin-top: 1px; }
.az { font: 700 13px "Liberation Sans", sans-serif; }
.az.a { fill: #3f7fbf; }
.az.z { fill: #9b5fb5; }
.collapse { position: absolute; right: 10px; bottom: 6px; }

/* formula bar */
.fbar { height: 47px; flex: none; display: flex; padding: 10px 5px 0 5px; }
.namebox, .fbtns, .finput { height: 26px; border: 1px solid #c6c6c6; display: flex; align-items: center; flex: none; }
.namebox { width: 102px; justify-content: space-between; padding: 0 6px; color: #333; font-size: 12px; }
.grip { width: 31px; flex: none; position: relative; }
.grip::after { content: ""; position: absolute; left: 14px; top: 8px; width: 2px; height: 10px; background: repeating-linear-gradient(#aaa 0 2px, transparent 2px 4px); }
.fbtns { width: 109px; padding-left: 7px; gap: 18px; }
.fx { font: italic 700 24px "Liberation Serif", serif; color: #666; margin-left: 0; }
.finput { flex: 1; margin-left: 4px; justify-content: flex-end; padding-right: 3px; }

/* sheet */
.sheet { height: 800px; flex: none; display: flex; border-bottom: 1px solid #ababab; }
.grid { flex: none; width: 1898px; height: 800px; display: grid;
  grid-template-columns: 49px 112px 111px 112px 187px 200px 172px 112px 154px 112px 113px 111px 112px 112px 112px 17px;
  grid-template-rows: 33px repeat(13, 35px) 210px 35px 35px 32px;
  font-family: Lato, "Noto Sans", sans-serif; font-size: 23.6px; line-height: 35px; color: #000;
  overflow: hidden; }
.corner { border-right: 1px solid #d4d4d4; border-bottom: 1px solid #ababab; position: relative; display: flex; align-items: center; justify-content: center; }
.corner i { width: 0; height: 0; border-left: 26px solid transparent; border-bottom: 26px solid #dfdfdf; margin-left: 15px; }
.ch { display: flex; align-items: center; justify-content: center; color: #444; border-right: 1px solid #d4d4d4; border-bottom: 1px solid #ababab; }
.ch.act { background: #e1e1e1; color: #217346; font-weight: 700; border-bottom: 2px solid #217346; }
.rh { display: flex; align-items: center; justify-content: center; color: #444; border-right: 1px solid #ababab; border-bottom: 1px solid #d4d4d4; padding-top: 1px; }
.rh.act { background: #e1e1e1; color: #217346; font-weight: 700; border-right: 2px solid #217346; }
.rh.end { align-items: flex-end; }
.c { display: flex; align-items: center; justify-content: center; text-align: center; white-space: nowrap; position: relative; border-right: 1px solid #d4d4d4; border-bottom: 1px solid #d4d4d4; }
.kr { border-right-color: #000; }
.kb { border-bottom-color: #000; }
.t { border-right-color: #000; border-bottom-color: #000; }
.nb { border-color: transparent; }
.x3 { grid-column: span 3; }
.y2 { grid-row: span 2; }
.y3 { grid-row: span 3; }
.y5 { grid-row: span 5; }
.y6 { grid-row: span 6; }
.y7 { grid-row: span 7; }
.y9 { grid-row: span 9; }
.y10 { grid-row: span 10; }
.red { color: #f00; }
.wh { color: #fff; }
.low { display: block; text-align: left; padding: 140px 0 0 4px; }
.bg-cyan { background: #0ff; }
.bg-peach { background: #f8cbad; }
.bg-sky { background: #bdd7ee; }
.bg-violet { background: #99f; }
.bg-mint { background: #0f9; }
.bg-amber { background: #ffc000; }
.bg-lime { background: #9f6; }
.bg-azure { background: #09f; }
.bg-green { background: #92d050; }
.bg-pink { background: #f69; }
.bg-yellow { background: #ff0; }
.bg-blue { background: #36f; }
.sel { position: absolute; left: -1px; top: -2px; right: -2px; bottom: -1px; border: 2px solid #217346; z-index: 2; }
.sel b { position: absolute; right: -3px; bottom: -3px; width: 5px; height: 5px; background: #217346; }
.vscroll { flex: 1; display: flex; flex-direction: column; padding: 2px 3px 0 4px; background: #f0f0f0; }
.sbtn { height: 13px; border: 1px solid #ababab; background: #fff; display: flex; align-items: center; justify-content: center; flex: none; }
.vthumb { height: 437px; margin-top: 3px; border: 1px solid #ababab; background: #fff; flex: none; }
.vtrack { flex: 1; }

/* sheet tabs */
.sheetbar { height: 28px; flex: none; background: #f5f5f5; display: flex; position: relative; }
.nav { width: 100px; display: flex; align-items: center; gap: 24px; padding-left: 26px; height: 27px; }
.arr-l { width: 0; height: 0; border-top: 4px solid transparent; border-bottom: 4px solid transparent; border-right: 5px solid #c0c0c0; }
.arr-r { width: 0; height: 0; border-top: 4px solid transparent; border-bottom: 4px solid transparent; border-left: 5px solid #c0c0c0; }
.arr-l.dk { border-right-color: #666; }
.arr-r.dk { border-left-color: #666; }
.sheet-tab { width: 65px; height: 25px; background: #fff; color: #217346; font-weight: 700; font-size: 12px; display: flex; align-items: center; justify-content: center; border: 1px solid #ababab; border-top: 0; border-bottom: 2px solid #217346; flex: none; }
.add { margin: 6px 0 0 33px; flex: none; }
.dots { width: 2px; height: 10px; margin: 9px 0 0 937px; flex: none; background: repeating-linear-gradient(#999 0 2px, transparent 2px 4px); }
.hscroll { display: flex; height: 15px; margin: 7px 0 0 17px; width: 728px; flex: none; background: #e6e6e6; }
.hbtn { width: 14px; border: 1px solid #ababab; background: #fff; display: flex; align-items: center; justify-content: center; flex: none; }
.hthumb { width: 610px; margin-left: 1px; border: 1px solid #ababab; background: #fff; flex: none; }
.htrack { flex: 1; }

/* status */
.status { height: 22px; flex: none; background: #217346; color: #fff; display: flex; align-items: center; font-size: 10.5px; }
.ready { padding-left: 7px; }
.views { margin-left: auto; display: flex; height: 21px; align-self: flex-end; }
.view { width: 38px; display: flex; align-items: center; justify-content: center; padding-bottom: 1px; }
.view.on { background: #0a6332; }
.zoom { display: flex; align-items: center; margin-left: 4px; }
.z-minus { width: 6px; height: 2px; background: #fff; margin-right: 5px; }
.z-plus { width: 9px; height: 9px; margin-left: 3px; background: linear-gradient(#fff,#fff) center/9px 2px no-repeat, linear-gradient(#fff,#fff) center/2px 9px no-repeat; }
.slider { width: 100px; height: 1px; background: #fff; position: relative; }
.tick { position: absolute; left: 50px; top: -3px; width: 1px; height: 7px; background: #fff; }
.knob { position: absolute; left: 60px; top: -6px; width: 4px; height: 13px; background: #fff; }
.pct-z { width: 51px; text-align: right; padding-right: 8px; font-size: 11px; }

/* taskbar */
.taskbar { height: 40px; flex: none; background: #444; display: flex; color: #fff; }
.tile { width: 49px; display: flex; align-items: center; justify-content: center; position: relative; flex: none; }
.tile.run::after { content: ""; position: absolute; left: 5px; right: 5px; bottom: 0; height: 2px; background: #76b9ed; }
.tile.act { background: #676767; }
.tile.act::after { left: 0; right: 0; }
.ppl { font: 9px "Open Sans", sans-serif; fill: #fff; text-anchor: middle; }
.tray { margin-left: auto; display: flex; align-items: center; }
.ti { width: 24px; display: flex; justify-content: center; }
.eng { width: 34px; text-align: center; font-size: 11.5px; }
.clock { width: 68px; display: flex; flex-direction: column; align-items: center; font-size: 11.5px; line-height: 17px; }
.desk { width: 1px; height: 40px; background: #777; margin: 0 3px 0 0; }
```
